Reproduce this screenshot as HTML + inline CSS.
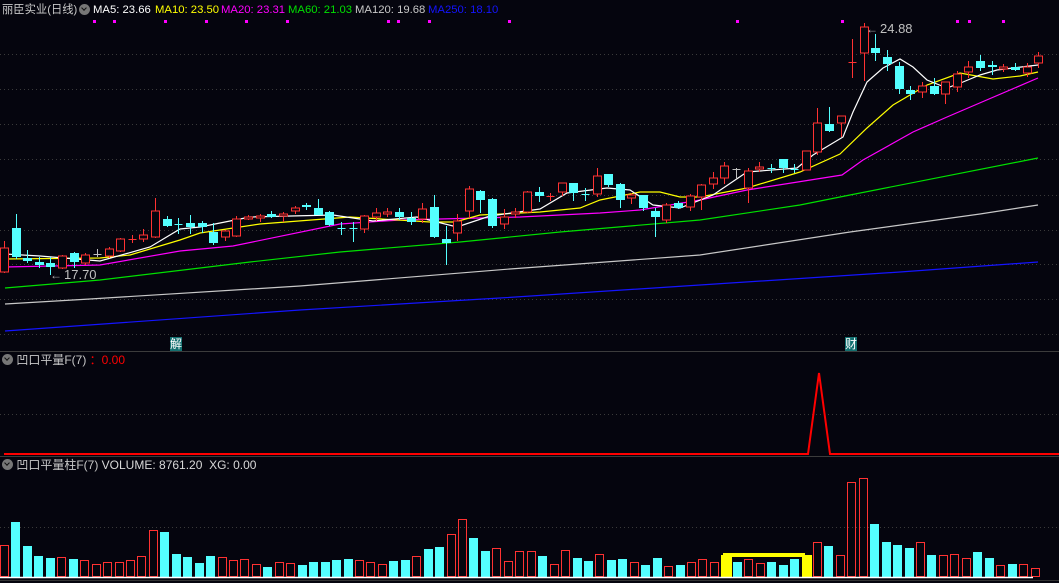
<!DOCTYPE html>
<html><head><meta charset="utf-8"><style>
html,body{margin:0;padding:0;background:#05050e;width:1059px;height:583px;overflow:hidden}
body{position:relative;font-family:"Liberation Sans","Noto Sans CJK SC",sans-serif;font-size:12px}
.t{position:absolute;white-space:nowrap;line-height:14px}
.h{position:absolute;white-space:nowrap;line-height:14px;top:3px;font-size:11.3px}
.ic{display:inline-block;width:11px;height:11px;border-radius:50%;background:#777;vertical-align:-1px;position:relative}
.ic:after{content:"";position:absolute;left:3px;top:2px;width:3px;height:3px;border-right:1.5px solid #111;border-bottom:1.5px solid #111;transform:rotate(45deg)}
svg{position:absolute;left:0;top:0}
</style></head><body>
<svg id="s" width="1059" height="583" xmlns="http://www.w3.org/2000/svg"></svg>
<div class="h" style="left:2px;color:#c8c8c8">丽臣实业(日线)</div>
<div class="h" style="left:79px;top:4px"><span class="ic"></span></div>
<div class="h" style="left:93px;color:#fff">MA5: 23.66</div>
<div class="h" style="left:155px;color:#ffff00">MA10: 23.50</div>
<div class="h" style="left:221px;color:#ff00ff">MA20: 23.31</div>
<div class="h" style="left:288px;color:#00e000">MA60: 21.03</div>
<div class="h" style="left:355px;color:#c8c8c8">MA120: 19.68</div>
<div class="h" style="left:428px;color:#1414ff">MA250: 18.10</div>
<div class="t" style="left:866px;top:22px;color:#aaa">&#8592;</div>
<div class="t" style="left:880px;top:22px;color:#c0c0c0;font-size:13px">24.88</div>
<div class="t" style="left:50px;top:268px;color:#aaa">&#8592;</div>
<div class="t" style="left:64px;top:268px;color:#c0c0c0;font-size:13px">17.70</div>
<div class="t" style="left:170px;top:337px;background:#137070;color:#fff;font-size:12px">解</div>
<div class="t" style="left:845px;top:337px;background:#137070;color:#fff;font-size:12px">财</div>
<div class="t" style="left:2px;top:353px;color:#c8c8c8"><span class="ic"></span> 凹口平量F(7) <span style="color:#f00">：0.00</span></div>
<div class="t" style="left:2px;top:458px;color:#c8c8c8"><span class="ic"></span> 凹口平量柱F(7) <span style="color:#d8d8d8">VOLUME: 8761.20&nbsp; XG: 0.00</span></div>
<script>
var s=document.getElementById('s'),h='';
function L(x1,y1,x2,y2,c,w,d){h+='<line x1="'+x1+'" y1="'+y1+'" x2="'+x2+'" y2="'+y2+'" stroke="'+c+'" stroke-width="'+(w||1)+'"'+(d?' stroke-dasharray="'+d+'"':'')+'/>';}
function P(pts,c,w){h+='<polyline fill="none" stroke="'+c+'" stroke-width="'+(w||1.2)+'" points="'+pts+'"/>';}
[54,89,124,159,195,230,264,299,334].forEach(function(y){L(0,y+.5,1059,y+.5,'#3a3a3a',1,'1 3');});
L(0,414.5,1059,414.5,'#3a3a3a',1,'1 3');L(0,527.5,1059,527.5,'#3a3a3a',1,'1 3');
L(0,351.5,1059,351.5,'#3c3c3c');L(0,456.5,1059,456.5,'#3c3c3c');
[94,114,165,206,246,287,388,398,429,509,737,842,957,969,1003].forEach(function(x){h+='<rect x="'+(x-1)+'" y="20" width="3" height="3" fill="#ff00ff"/>';});
P('5,331 300,310 500,298 700,285 900,272 1038,262','#1414ff');
P('5,304 90,299 300,286 510,269 700,255 850,232 980,214 1038,205','#c8c8c8');
P('5,288 100,280 250,262 340,252 460,242 560,232 700,220 800,205 850,195 1038,158','#00e000');
P('5,267 100,265 180,251 233,246 340,224 400,220 520,217 600,213 640,210 700,200 747,190 842,175 863,160 913,132 947,117 1038,78','#ff00ff');
P('5,259 100,258 130,255 180,240 200,233 260,224 350,217 430,222 455,222 480,215 540,212 580,208 600,200 620,196 640,192 660,192 680,197 700,197 747,188 800,172 840,154 867,128 893,105 927,85 960,73 993,79 1020,76 1038,72','#ffff00');
P('5,254 40,256 100,261 150,247 180,229 200,227 250,217 333,215 373,221 417,217 437,222 457,227 490,216 540,209 567,193 607,188 630,190 653,205 680,208 713,195 747,172 797,168 813,155 843,137 853,112 867,82 883,68 900,59 913,67 927,80 947,88 963,82 980,75 997,70 1013,68 1038,65','#ffffff');
var C=[['r',248,272,241,273],['c',228,257,214,259],['c',258,261,250,263],['c',262,265,257,268],['c',263,267,257,275],['r',256,268,255,269],['c',253,262,252,268],['r',255,263,253,265],['g',254,254,249,257],['r',249,256,247,258],['r',239,251,238,252],['r',239,239,235,243],['r',235,239,229,242],['r',211,237,198,238],['c',219,226,216,227],['c',224,224,218,234],['c',223,227,215,234],['c',223,227,221,233],['c',232,243,223,245],['r',231,237,230,241],['r',219,236,216,237],['r',217,219,215,220],['r',216,218,214,222],['c',214,217,211,218],['r',214,216,212,222],['r',208,211,206,214],['c',205,207,203,210],['c',208,215,199,215],['c',212,225,211,226],['c',228,228,222,235],['c',228,228,222,242],['r',216,229,215,233],['r',213,217,208,221],['r',212,214,208,217],['c',212,217,208,220],['c',218,222,212,225],['r',209,219,203,223],['c',207,237,195,238],['c',239,243,226,265],['r',221,233,214,241],['r',189,211,186,218],['c',191,200,190,213],['c',199,226,198,228],['r',217,224,209,229],['r',212,214,208,218],['r',192,212,191,213],['c',192,196,187,202],['r',196,196,193,201],['r',183,192,183,196],['c',183,193,183,201],['c',194,194,188,201],['r',176,194,168,197],['c',174,185,174,187],['c',184,200,183,208],['r',195,198,193,204],['c',195,208,195,211],['c',211,217,208,237],['r',205,220,203,223],['c',203,208,201,209],['r',196,207,194,211],['r',185,197,184,210],['r',178,184,172,189],['r',166,178,162,184],['g',169,169,168,180],['r',171,188,168,203],['r',167,169,162,172],['c',168,168,164,173],['c',159,168,159,173],['c',169,169,164,173],['r',151,170,151,170],['r',123,152,108,155],['c',124,131,107,132],['r',116,123,116,137],['r',62,62,39,78],['r',27,53,23,81],['c',48,53,34,61],['c',57,64,50,71],['c',66,89,62,94],['c',90,94,86,100],['r',86,92,82,98],['c',86,94,78,95],['r',82,94,82,104],['r',74,87,71,92],['r',67,72,61,78],['c',61,68,55,71],['c',65,67,61,75],['r',67,69,64,72],['c',67,70,63,71],['r',67,73,63,77],['r',56,63,52,68]];
C.forEach(function(c,i){var x=Math.round(4+i*11.62)+.5,col=c[0]=='r'?'#ff3232':c[0]=='c'?'#54ffff':'#c0c0c0';
 L(x,c[3],x,c[4],col);
 if(c[2]-c[1]<1){L(x-4,c[1]+.5,x+4,c[1]+.5,col);}
 else if(c[0]=='c'){h+='<rect x="'+(x-4.5)+'" y="'+c[1]+'" width="9" height="'+(c[2]-c[1])+'" fill="'+col+'"/>';}
 else{h+='<rect x="'+(x-4)+'" y="'+c[1]+'" width="8" height="'+(c[2]-c[1])+'" fill="#05050e" stroke="'+col+'"/>';}
});
P('4,454 808,454 819,373 830,454 1059,454','#ff0000',2);
var V=[['r',545],['c',522],['c',546],['c',556],['c',558],['r',557],['c',559],['r',560],['r',564],['r',562],['r',562],['r',560],['r',556],['r',530],['c',532],['c',554],['c',557],['c',563],['c',556],['r',557],['r',560],['r',559],['r',564],['c',567],['r',562],['r',563],['c',565],['c',562],['c',562],['c',560],['c',559],['r',560],['r',562],['r',564],['c',561],['c',560],['r',556],['c',549],['c',547],['r',534],['r',519],['c',538],['c',551],['r',548],['r',561],['r',551],['r',551],['c',556],['r',564],['r',550],['c',558],['c',561],['r',554],['c',560],['c',559],['r',562],['c',565],['c',558],['r',566],['c',565],['r',562],['r',559],['r',562],['y',555],['c',562],['r',559],['r',563],['c',562],['c',565],['c',559],['y',555],['r',542],['c',546],['r',555],['r',482],['r',478],['c',524],['c',542],['c',545],['c',548],['r',542],['c',555],['r',555],['r',554],['r',558],['c',552],['c',558],['r',565],['c',564],['r',564],['r',568]];
V.forEach(function(v,i){var x=Math.round(i*11.45);
 if(v[0]=='c')h+='<rect x="'+x+'" y="'+v[1]+'" width="9" height="'+(577-v[1])+'" fill="#54ffff"/>';
 else if(v[0]=='r')h+='<rect x="'+(x+.5)+'" y="'+(v[1]+.5)+'" width="8" height="'+(576-v[1])+'" fill="none" stroke="#ff3232"/>';
 else h+='<rect x="'+x+'" y="'+v[1]+'" width="'+(i<70?11:10)+'" height="'+(577-v[1])+'" fill="#ffff00"/>';
});
h+='<rect x="723" y="553" width="82" height="4" fill="#ffff00"/>';
L(0,577.5,1033,577.5,'#ffffff',1.5);L(0,580.5,1059,580.5,'#333');
s.innerHTML=h;
</script>
</body></html>
